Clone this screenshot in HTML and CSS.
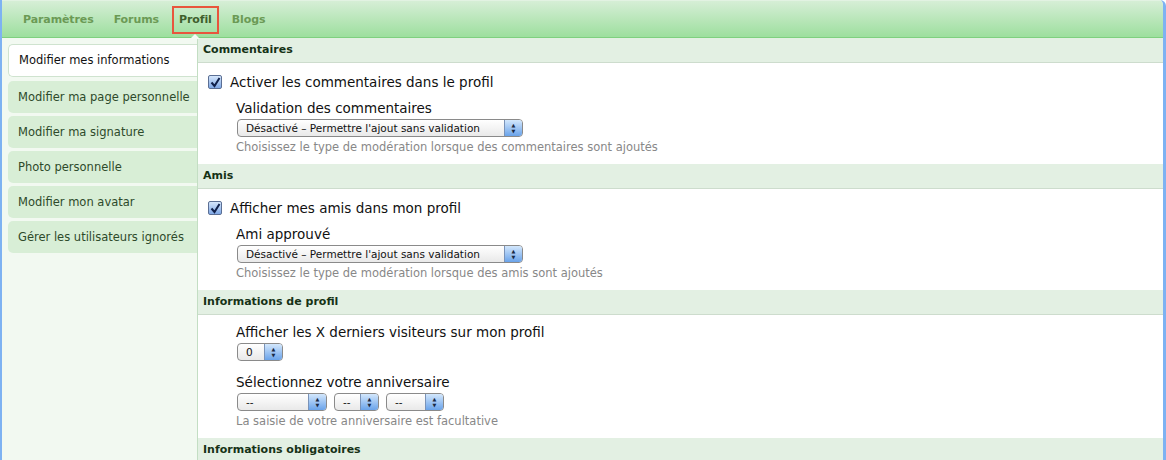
FILE: index.html
```html
<!DOCTYPE html>
<html lang="fr">
    <head>
        <meta charset="UTF-8" />
        <title>Profil</title>
        <link rel="stylesheet" href="styles.css">
    </head>
    <body>
        <div class="window">
            <div class="tabs">
                <a class="tab">Paramètres</a>
                <a class="tab">Forums</a>
                <a class="tab active">Profil</a>
                <a class="tab">Blogs</a>
            </div>
            <div class="main">
                <ul class="sidebar">
                    <li class="current">Modifier mes informations</li>
                    <li>Modifier ma page personnelle</li>
                    <li>Modifier ma signature</li>
                    <li>Photo personnelle</li>
                    <li>Modifier mon avatar</li>
                    <li>Gérer les utilisateurs ignorés</li>
                </ul>
                <div class="content">
                    <!-- Commentaires -->
                    <div class="section-title">Commentaires</div>
                    <div class="section">
                        <label class="check-row"><span class="checkbox"><svg width="11" height="11" viewBox="0 0 11 11"><path d="M1.5 5.5 L4.5 9 L9.5 1" fill="none" stroke="#10204a" stroke-width="2"/></svg></span>Activer les commentaires dans le profil</label>
                        <div class="field">
                            <div class="field-label">Validation des commentaires</div>
                            <div class="select wide"><span class="value">Désactivé – Permettre l'ajout sans validation</span><span class="arrows">▲<br>▼</span></div>
                            <div class="help">Choisissez le type de modération lorsque des commentaires sont ajoutés</div>
                        </div>
                    </div>

                    <!-- Amis -->
                    <div class="section-title">Amis</div>
                    <div class="section">
                        <label class="check-row"><span class="checkbox"><svg width="11" height="11" viewBox="0 0 11 11"><path d="M1.5 5.5 L4.5 9 L9.5 1" fill="none" stroke="#10204a" stroke-width="2"/></svg></span>Afficher mes amis dans mon profil</label>
                        <div class="field">
                            <div class="field-label">Ami approuvé</div>
                            <div class="select wide"><span class="value">Désactivé – Permettre l'ajout sans validation</span><span class="arrows">▲<br>▼</span></div>
                            <div class="help">Choisissez le type de modération lorsque des amis sont ajoutés</div>
                        </div>
                    </div>

                    <!-- Informations de profil -->
                    <div class="section-title">Informations de profil</div>
                    <div class="section">
                        <div class="field first">
                            <div class="field-label">Afficher les X derniers visiteurs sur mon profil</div>
                            <div class="select tiny"><span class="value">0</span><span class="arrows">▲<br>▼</span></div>
                        </div>
                        <div class="field gap">
                            <div class="field-label">Sélectionnez votre anniversaire</div>
                            <div class="selects">
                                <div class="select month"><span class="value">--</span><span class="arrows">▲<br>▼</span></div>
                                <div class="select day"><span class="value">--</span><span class="arrows">▲<br>▼</span></div>
                                <div class="select year"><span class="value">--</span><span class="arrows">▲<br>▼</span></div>
                            </div>
                            <div class="help">La saisie de votre anniversaire est facultative</div>
                        </div>
                    </div>

                    <div class="section-title">Informations obligatoires</div>
                </div>
            </div>
        </div>
    </body>
</html>
```

FILE: styles.css
```css
body {
    margin: 0;
    font-family: "DejaVu Sans", sans-serif;
    background-color: #fff;
}

.window {
    height: 460px;
    border-left: 2px solid #7eb2f2;
    border-right: 3px solid #7eb2f2;
    border-top-right-radius: 6px;
    overflow: hidden;
    background-color: #f2f9f1;
}

/* Top tabs */
.tabs {
    height: 34px;
    padding-top: 2px;
    display: flex;
    align-items: center;
    padding-left: 14px;
    gap: 6px;
    background: linear-gradient(#d6eed6, #9ddf9e);
    border-top: 1px solid #e2f2e2;
    border-bottom: 1px solid #7fd07f;
    position: relative;
}

.tab {
    font-size: 11px;
    font-weight: bold;
    letter-spacing: -0.1px;
    line-height: 14px;
    color: #6b9a55;
    padding: 5px 5px;
    border: 2px solid transparent;
    cursor: pointer;
}

.tab.active {
    color: #3f5f2d;
    border-color: #e8553d;
    position: relative;
}

/* little pointer under the active tab */
.tab.active::after {
    content: "";
    position: absolute;
    left: 50%;
    margin-left: -5px;
    bottom: -7px;
    border-left: 5px solid transparent;
    border-right: 5px solid transparent;
    border-bottom: 5px solid #f4fbf4;
}

.main {
    display: flex;
}

/* Left menu */
.sidebar {
    list-style: none;
    margin: 0;
    padding: 6px 0 0 6px;
    width: 189px;
    flex-shrink: 0;
}

.sidebar li {
    height: 32px;
    line-height: 32px;
    padding-left: 10px;
    margin-bottom: 3px;
    font-size: 11.5px;
    color: #2e4a2b;
    background-color: #d8eed6;
    border-radius: 5px 0 0 5px;
    white-space: nowrap;
    overflow: hidden;
}

.sidebar li.current {
    height: 31px;
    line-height: 31px;
    background-color: #fff;
    color: #111;
    border: 1px solid #cfe3cf;
    border-right: none;
    margin-bottom: 4px;
}

/* Right side */
.content {
    flex-grow: 1;
    background-color: #fff;
    border-left: 1px solid #c3dec3;
    height: 430px;
}

.section-title {
    height: 24px;
    line-height: 24px;
    padding-left: 5px;
    font-size: 11px;
    font-weight: bold;
    color: #163216;
    background-color: #e3f0e3;
    border-bottom: 1px solid #cddccd;
}

.section {
    padding: 9px 0 9px 10px;
}

.check-row {
    display: flex;
    align-items: center;
    height: 20px;
    font-size: 13.5px;
    color: #111;
}

.checkbox {
    width: 12px;
    height: 12px;
    margin-right: 8px;
    border: 1px solid #5b6f94;
    border-radius: 2px;
    background: linear-gradient(#d5e6fb, #7fa8e6);
    display: flex;
    align-items: center;
    justify-content: center;
}

.field {
    margin-left: 28px;
    margin-top: 7px;
}

.field.first {
    margin-top: -1px;
}

.field.gap {
    margin-top: 12px;
}

.field-label {
    font-size: 13.5px;
    line-height: 18px;
    color: #111;
    margin-bottom: 2px;
}

.help {
    font-size: 11.5px;
    line-height: 16px;
    color: #888;
    margin-top: 2px;
}

/* Aqua looking select */
.select {
    display: flex;
    height: 16px;
    margin-left: 1px;
    border: 1px solid #8a8a8a;
    border-radius: 4px;
    background: linear-gradient(#fff, #e9e9e9);
    font-size: 10.5px;
    line-height: 16px;
    color: #111;
    overflow: hidden;
}

.select .value {
    flex-grow: 1;
    padding-left: 8px;
    white-space: nowrap;
}

.select .arrows {
    width: 17px;
    flex-shrink: 0;
    font-size: 5px;
    line-height: 6px;
    padding-top: 2px;
    text-align: center;
    color: #1a2a44;
    background: linear-gradient(#d3e7fc, #6aa3ea);
    border-left: 1px solid #7a93b8;
}

.select.wide { width: 284px; }
.select.tiny { width: 44px; }
.select.month { width: 88px; }
.select.day { width: 43px; }
.select.year { width: 56px; }

.selects {
    display: flex;
    gap: 7px;
}

.selects .select {
    margin-left: 0;
}

.selects .select:first-child {
    margin-left: 1px;
}
```
